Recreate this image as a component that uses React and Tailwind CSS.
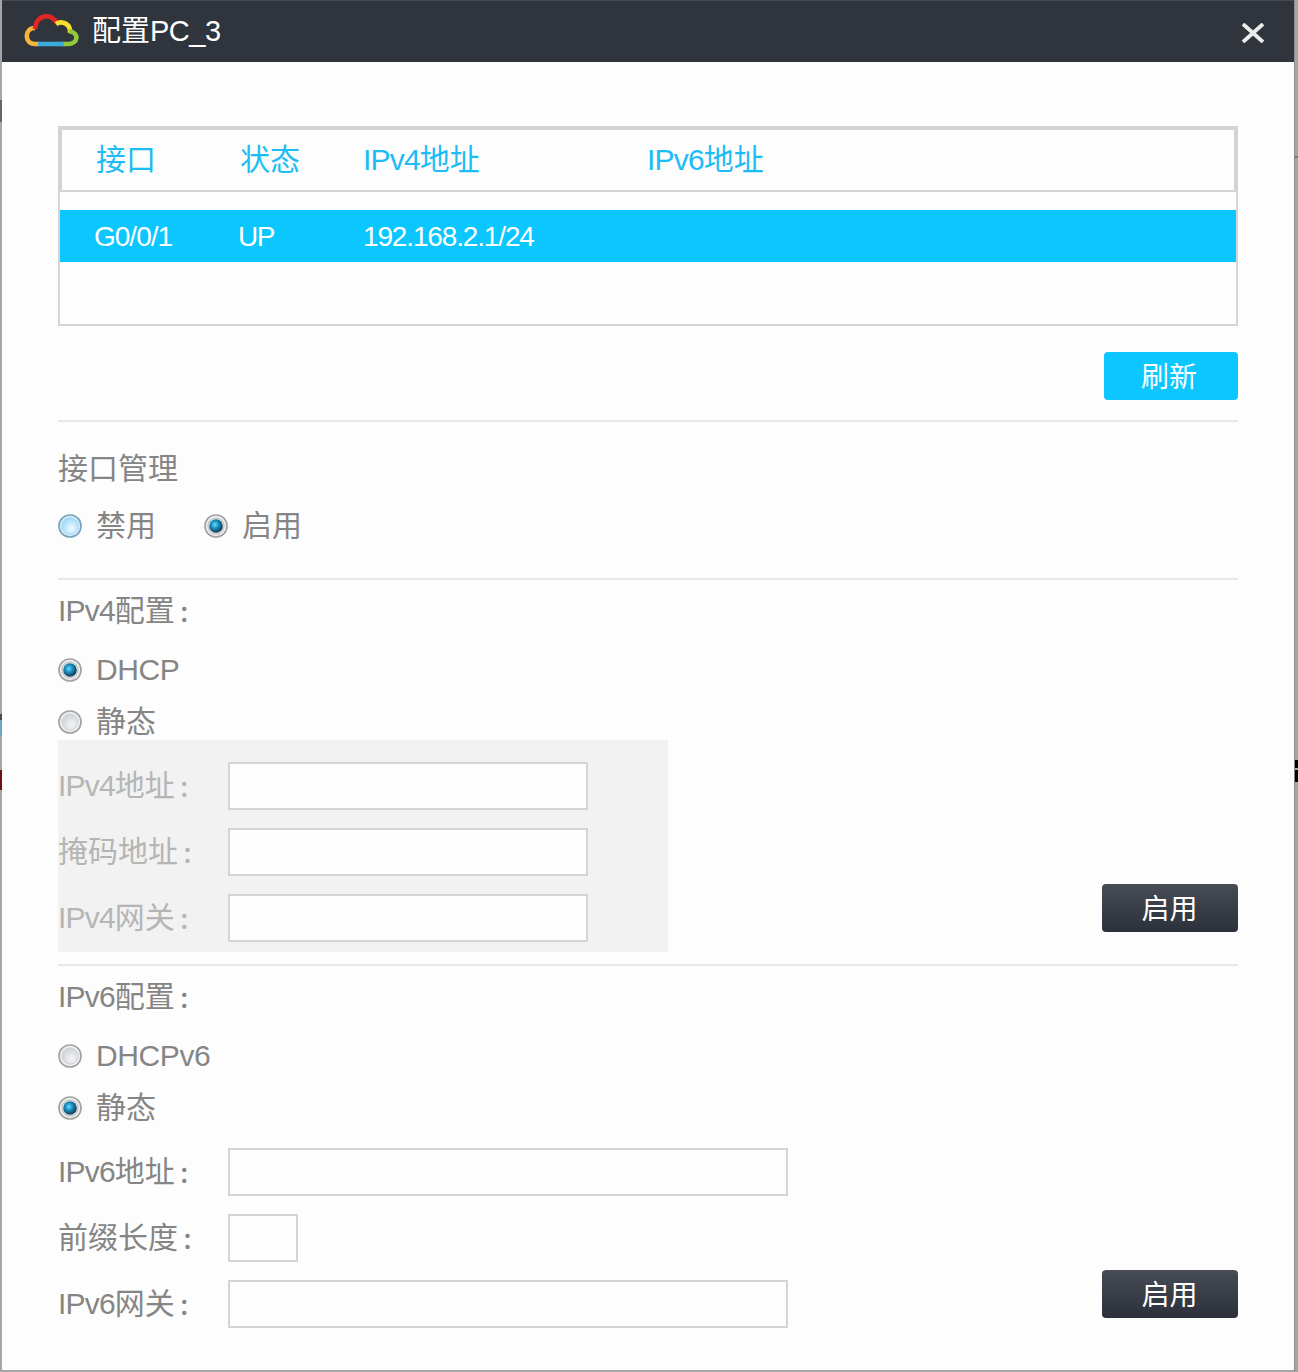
import React from "react";

// Mixed Latin / Chinese label: each script run gets its own metrics.
function Label({ children, className = "", tracking = "tracking-[-0.8px]" }) {
  const runs = children.match(/[\x20-\x7e]+|[^\x20-\x7e：]+|：/g);
  return (
    <span className={`inline-flex h-[30px] items-center whitespace-nowrap text-[30px] leading-[30px] ${className}`}>
      {runs.map((run, i) => {
        if (run === "：") {
          return <span key={i} className="pb-px pl-1 font-['Noto_Sans_CJK_SC',sans-serif] text-[22px] font-bold">{run}</span>;
        }
        return /[\x20-\x7e]/.test(run) ? (
          <span key={i} className={`font-['Liberation_Sans',sans-serif] ${tracking}`}>{run}</span>
        ) : (
          <span key={i} className="pb-[7px] font-['Noto_Sans_CJK_SC',sans-serif]">{run}</span>
        );
      })}
    </span>
  );
}

function CloudLogo() {
  return (
    <svg width="56" height="34" viewBox="0 0 56 34" fill="none" strokeWidth="4.6" className="mb-0.5 shrink-0">
      <path d="M16 30 H12 C1 30 1 14 12 14" stroke="#f3b53c" />
      <path d="M12 15 C13 -1 30 -1 34.5 10" stroke="#e32624" />
      <path d="M33 10 C39 6 48 10 47 19" stroke="#f6e22d" />
      <path d="M46 17 C57 19 55 30 45 30 H40" stroke="#93c83d" />
      <path d="M15 30 H41" stroke="#3cabd9" />
    </svg>
  );
}

function Radio({ id, checked, hover }) {
  return (
    <svg width="24" height="24" viewBox="0 0 24 24" className="shrink-0">
      <defs>
        <radialGradient id={`${id}-idle`} cx="60%" cy="65%" r="60%">
          <stop offset="0" stopColor={hover ? "#edfaff" : "#f3f4f5"} />
          <stop offset="1" stopColor={hover ? "#a4dcfb" : "#d2d5d9"} />
        </radialGradient>
        <radialGradient id={`${id}-dot`} cx="42%" cy="40%" r="58%">
          <stop offset="0" stopColor="#65dcff" />
          <stop offset="0.45" stopColor="#1c93c4" />
          <stop offset="1" stopColor="#123c56" />
        </radialGradient>
      </defs>
      <circle cx="12" cy="12" r="11" fill={hover ? "#d5f0fd" : "#f4f4f4"} stroke={hover ? "#7ba3bc" : "#a3a3a3"} strokeWidth="1.7" />
      {checked ? (
        <>
          <circle cx="12" cy="12" r="8" fill="none" stroke="#c4c7ca" strokeWidth="1.4" />
          <circle cx="12" cy="12" r="6.8" fill={`url(#${id}-dot)`} />
        </>
      ) : (
        <circle cx="12" cy="12" r="8.2" fill={`url(#${id}-idle)`} stroke={hover ? "#a6d5ef" : "#cfd1d3"} />
      )}
    </svg>
  );
}

function Option({ id, text, checked, hover, className = "" }) {
  return (
    <div className={`flex h-[30px] items-center ${className}`}>
      <Radio id={id} checked={checked} hover={hover} />
      <Label className="ml-[14px]" tracking="tracking-[-0.4px]">{text}</Label>
    </div>
  );
}

function Field({ label, width, muted }) {
  return (
    <div className="flex h-12 items-center">
      <div className="flex w-[170px] shrink-0">
        <Label className={muted ? "text-[#b5b5b5]" : ""}>{label}</Label>
      </div>
      <div className={`h-12 border-2 border-[#d4d4d4] bg-[#fdfdfd] ${width}`} />
    </div>
  );
}

function Divider() {
  return <div className="h-0.5 w-full shrink-0 bg-[#e8e8e8]" />;
}

function DarkButton({ children }) {
  return (
    <button className="flex h-12 w-[136px] items-center justify-center rounded bg-linear-to-b from-[#484c55] to-[#2c303b] pr-px pb-0.5 font-['Noto_Sans_CJK_SC',sans-serif] text-[28px] leading-[28px] text-white">
      {children}
    </button>
  );
}

export default function App() {
  return (
    <div className="flex h-[1372px] w-[1298px] bg-[#a6a6a6]">
      <div className="flex w-0.5 shrink-0 flex-col">
        <div className="mt-[100px] h-[22px] bg-[#65656b]" />
        <div className="mt-[592px] h-1.5 bg-[#4b4b4b]" />
        <div className="h-4 bg-[#67aac1]" />
        <div className="mt-[34px] h-5 bg-[#6d1111]" />
      </div>

      <div className="flex h-[1370px] w-[1292px] shrink-0 flex-col bg-[#fdfdfd] text-[#858585]">
        <header className="flex h-[62px] shrink-0 items-center border-t border-[#454951] bg-[#30353d] pr-[29px] pl-[21px]">
          <CloudLogo />
          <div className="ml-[13px] flex items-center text-[29px] leading-[30px] text-white">
            <span className="pb-[7px] font-['Noto_Sans_CJK_SC',sans-serif]">配置</span>
            <span className="pb-0.5 font-['Liberation_Sans',sans-serif] tracking-[-0.5px]">PC_3</span>
          </div>
          <svg width="24" height="20" viewBox="0 0 24 20" className="mt-0.5 ml-auto" stroke="#ececec" strokeWidth="3.8">
            <path d="M2 1 L22 19 M22 1 L2 19" />
          </svg>
        </header>

        <main className="flex flex-1 flex-col pt-16 pr-14 pl-14">
          <section className="h-[200px] shrink-0 border-2 border-[#d4d4d4]">
            <div className="grid h-16 grid-cols-[144px_123px_284px_1fr] items-center border-2 border-[#d4d4d4] pl-[34px] text-[#1cbcf5]">
              <Label>接口</Label>
              <Label>状态</Label>
              <Label>IPv4地址</Label>
              <Label>IPv6地址</Label>
            </div>
            <div className="mt-[18px] grid h-[52px] grid-cols-[144px_125px_1fr] items-center bg-[#0cc6ff] pt-0.5 pl-[34px] font-['Liberation_Sans',sans-serif] text-[28px] text-white">
              <span className="tracking-[-1px]">G0/0/1</span>
              <span className="tracking-[-1.5px]">UP</span>
              <span className="tracking-[-1.15px]">192.168.2.1/24</span>
            </div>
          </section>

          <button className="mt-[26px] mb-5 flex h-12 w-[134px] shrink-0 items-center justify-center self-end rounded-sm bg-[#0cc6ff] pr-1 pb-0.5 font-['Noto_Sans_CJK_SC',sans-serif] text-[28px] leading-[28px] text-white">
            刷新
          </button>
          <Divider />

          <section className="flex h-[156px] shrink-0 flex-col pt-8">
            <Label>接口管理</Label>
            <div className="mt-[27px] flex">
              <Option id="port-off" text="禁用" hover />
              <Option id="port-on" text="启用" checked className="ml-12" />
            </div>
          </section>
          <Divider />

          <section className="flex h-[384px] shrink-0 items-end justify-between">
            <div className="flex h-full flex-col pt-4">
              <Label>IPv4配置：</Label>
              <Option id="v4-dhcp" text="DHCP" checked className="mt-[29px]" />
              <Option id="v4-static" text="静态" className="mt-[22px]" />
              <div className="mt-[3px] flex h-[212px] w-[610px] flex-col gap-[18px] bg-[#f2f2f2] pt-[22px]">
                <Field label="IPv4地址：" width="w-[360px]" muted />
                <Field label="掩码地址：" width="w-[360px]" muted />
                <Field label="IPv4网关：" width="w-[360px]" muted />
              </div>
            </div>
            <div className="mb-8">
              <DarkButton>启用</DarkButton>
            </div>
          </section>
          <Divider />

          <section className="flex h-[404px] shrink-0 items-end justify-between">
            <div className="flex h-full flex-col pt-4">
              <Label>IPv6配置：</Label>
              <Option id="v6-dhcp" text="DHCPv6" className="mt-[29px]" />
              <Option id="v6-static" text="静态" checked className="mt-[22px]" />
              <div className="mt-[25px] flex flex-col gap-[18px]">
                <Field label="IPv6地址：" width="w-[560px]" />
                <Field label="前缀长度：" width="w-[70px]" />
                <Field label="IPv6网关：" width="w-[560px]" />
              </div>
            </div>
            <div className="mb-[52px]">
              <DarkButton>启用</DarkButton>
            </div>
          </section>
        </main>
      </div>

      <div className="flex w-1 shrink-0 flex-col border-l border-[#8c8c8c]">
        <div className="mt-[156px] h-0.5 bg-[#777777]" />
        <div className="mt-[602px] h-2 bg-black" />
        <div className="mt-0.5 h-3 bg-black" />
      </div>
    </div>
  );
}
